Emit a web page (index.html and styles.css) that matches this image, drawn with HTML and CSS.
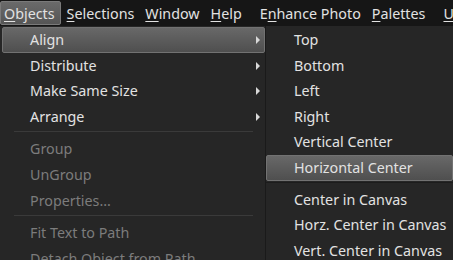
FILE: index.html
```html
<!DOCTYPE html>
<html lang="en">
    <head>
        <title>Objects menu</title>
        <meta charset="UTF-8">
        <link rel="stylesheet" href="styles.css">
    </head>
    <body>
        <div class="menubar">
            <div class="bar-item open"><u>O</u>bjects</div>
            <div class="bar-item"><u>S</u>elections</div>
            <div class="bar-item"><u>W</u>indow</div>
            <div class="bar-item"><u>H</u>elp</div>
            <div class="bar-sep"></div>
            <div class="bar-item">E<u>n</u>hance Photo</div>
            <div class="bar-item"><u>P</u>alettes</div>
            <div class="bar-sep"></div>
            <div class="bar-item"><u>U</u></div>
        </div>
        <div class="menus">
            <div class="menu main">
                <div class="item active">Align<span class="arrow"></span></div>
                <div class="item">Distribute<span class="arrow"></span></div>
                <div class="item">Make Same Size<span class="arrow"></span></div>
                <div class="item">Arrange<span class="arrow"></span></div>
                <div class="sep"></div>
                <div class="item disabled">Group</div>
                <div class="item disabled">UnGroup</div>
                <div class="item disabled">Properties...</div>
                <div class="sep"></div>
                <div class="item disabled">Fit Text to Path</div>
                <div class="item disabled">Detach Object from Path</div>
            </div>
            <div class="menu sub">
                <div class="item">Top</div>
                <div class="item">Bottom</div>
                <div class="item">Left</div>
                <div class="item">Right</div>
                <div class="item">Vertical Center</div>
                <div class="item active">Horizontal Center</div>
                <div class="sep"></div>
                <div class="item">Center in Canvas</div>
                <div class="item">Horz. Center in Canvas</div>
                <div class="item">Vert. Center in Canvas</div>
            </div>
        </div>
    </body>
</html>
```

FILE: styles.css
```css
body {
    margin: 0;
    background-color: #262626;
    font-family: 'Noto Sans', 'Open Sans', sans-serif;
    font-size: 14.3px;
    color: #e2e2e2;
    overflow: hidden;
    width: 453px;
    height: 260px;
}

u {
    text-decoration-thickness: 1px;
    text-underline-offset: 2px;
}

.menubar {
    display: flex;
    align-items: center;
    height: 26px;
    background-color: #161616;
    white-space: nowrap;
}

.bar-item {
    height: 24px;
    line-height: 23px;
    padding: 0 4px 0 3px;
    margin-right: 2px;
    box-sizing: border-box;
    border: 1px solid transparent;
}
.bar-item.open {
    background: linear-gradient(#6a6a6a, #555555);
    border-color: #7a7a7a;
    border-radius: 2px;
    padding-right: 5px;
}

.bar-sep {
    width: 1px;
    height: 18px;
    background-color: #3a3a3a;
    margin: 0 3px 0 4px;
}

.menus {
    display: flex;
    align-items: flex-start;
}

.menu {
    background-color: #262626;
    padding-top: 1px;
}
.menu.main {
    width: 263px;
    margin-left: 2px;
    border-right: 1px solid #1a1a1a;
}
.menu.sub {
    flex: 1;
}

.item {
    position: relative;
    height: 25.6px;
    line-height: 23px;
    padding-left: 27px;
    white-space: nowrap;
    box-sizing: border-box;
    border: 1px solid transparent;
}
.item.active {
    background: linear-gradient(#686868, #4f4f4f);
    border-color: #727272;
    border-radius: 2px;
}
.item.disabled {
    color: #7c7c7c;
}

.arrow {
    position: absolute;
    right: 4px;
    top: 8px;
    width: 0;
    height: 0;
    border-top: 4px solid transparent;
    border-bottom: 4px solid transparent;
    border-left: 4px solid #d8d8d8;
}

.sep {
    height: 1px;
    background-color: #3a3a3a;
    margin: 2px 12px 4px 12px;
}
.sub .sep {
    margin: 1px 0 4px 0;
    background-color: #1c1c1c;
}
```
